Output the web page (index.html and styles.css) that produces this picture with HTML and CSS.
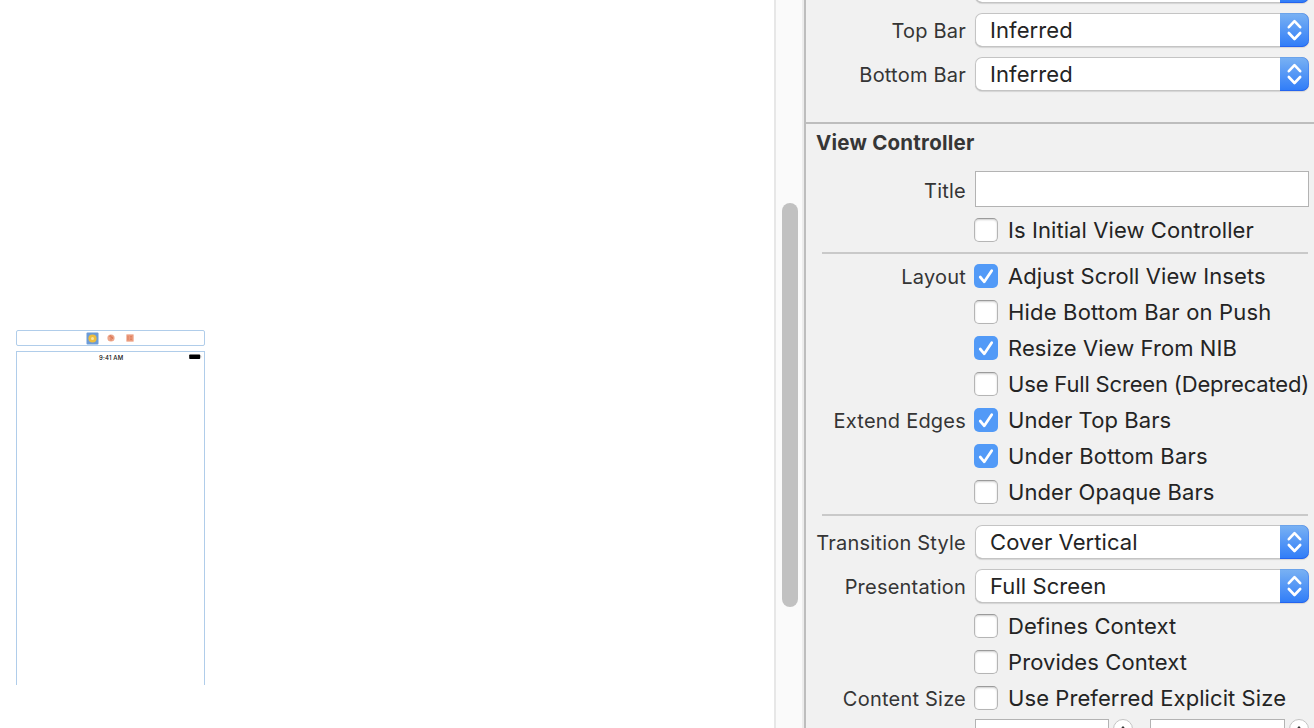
FILE: index.html
```html
<!DOCTYPE html>
<html lang="en">
<head>
<meta charset="utf-8">
<title>View Controller inspector</title>
<link rel="stylesheet" href="styles.css">
</head>
<body>
<svg class="defs" width="0" height="0" aria-hidden="true">
  <symbol id="chevrons" viewBox="0 0 29 34"><path d="M8.8 14.2 14.5 8.2 20.2 14.2M8.8 20 14.5 26 20.2 20" fill="none" stroke="#fff" stroke-width="2.6" stroke-linecap="round" stroke-linejoin="round"/></symbol>
  <symbol id="check" viewBox="0 0 24 24"><path d="M6.2 13 10.3 17.8 17.7 6.7" fill="none" stroke="#fff" stroke-width="2.7" stroke-linecap="round" stroke-linejoin="round"/></symbol>
</svg>
<div class="app">
  <main class="canvas">
    <div class="dock">
      <svg width="13" height="13" viewBox="0 0 13 13"><rect x=".5" y=".5" width="12" height="12" rx="1" fill="#6b9bd8"/><circle cx="6.5" cy="6.5" r="4.1" fill="#edbd3e"/><circle cx="6.5" cy="6.5" r="1.5" fill="#fae5a0"/></svg>
      <svg width="8" height="8" viewBox="0 0 8 8"><circle cx="4" cy="4" r="3.6" fill="#eda68b"/><path d="M2.3 2.4 4 1.7V6.5M4 3.2H5.6V5" fill="none" stroke="#d8714e" stroke-width=".9"/></svg>
      <svg width="8" height="8" viewBox="0 0 8 8"><rect x=".4" y=".4" width="7.2" height="7.2" fill="#ec9b7d"/><path d="M2 2V6M4 2.5H6M4 4H6M4 5.5H6" fill="none" stroke="#dc7c5c" stroke-width=".8"/></svg>
    </div>
    <div class="device">
      <span class="clock">9:41 AM</span>
      <svg class="battery" width="13" height="6" viewBox="0 0 13 6"><rect x=".2" y=".4" width="11" height="4.6" rx=".8" fill="#000"/><path d="M11.8 1.9V3.5" stroke="#888" stroke-width=".6"/></svg>
    </div>
  </main>
  <div class="scroller"><div class="thumb"></div></div>
  <aside class="inspector">
    <section class="metrics">
      <div class="row tall"><span class="label"></span><div class="select"><span class="value"></span><svg class="arrows"><use href="#chevrons"/></svg></div></div>
      <div class="row tall"><span class="label">Top Bar</span><div class="select"><span class="value">Inferred</span><svg class="arrows"><use href="#chevrons"/></svg></div></div>
      <div class="row tall"><span class="label">Bottom Bar</span><div class="select"><span class="value">Inferred</span><svg class="arrows"><use href="#chevrons"/></svg></div></div>
    </section>
    <section class="controller">
      <h2 class="heading">View Controller</h2>
      <div class="row tall"><span class="label">Title</span><div class="field"></div></div>
      <div class="row"><span class="label"></span><span class="box"></span><span class="option">Is Initial View Controller</span></div>
      <hr class="rule">
      <div class="row"><span class="label">Layout</span><span class="box on"><svg><use href="#check"/></svg></span><span class="option">Adjust Scroll View Insets</span></div>
      <div class="row"><span class="label"></span><span class="box"></span><span class="option wide">Hide Bottom Bar on Push</span></div>
      <div class="row"><span class="label"></span><span class="box on"><svg><use href="#check"/></svg></span><span class="option">Resize View From NIB</span></div>
      <div class="row"><span class="label"></span><span class="box"></span><span class="option tight">Use Full Screen (Deprecated)</span></div>
      <div class="row"><span class="label">Extend Edges</span><span class="box on"><svg><use href="#check"/></svg></span><span class="option">Under Top Bars</span></div>
      <div class="row"><span class="label"></span><span class="box on"><svg><use href="#check"/></svg></span><span class="option wide">Under Bottom Bars</span></div>
      <div class="row"><span class="label"></span><span class="box"></span><span class="option">Under Opaque Bars</span></div>
      <hr class="rule">
      <div class="row tall"><span class="label">Transition Style</span><div class="select"><span class="value">Cover Vertical</span><svg class="arrows"><use href="#chevrons"/></svg></div></div>
      <div class="row tall"><span class="label">Presentation</span><div class="select"><span class="value">Full Screen</span><svg class="arrows"><use href="#chevrons"/></svg></div></div>
      <div class="row"><span class="label"></span><span class="box"></span><span class="option">Defines Context</span></div>
      <div class="row"><span class="label"></span><span class="box"></span><span class="option">Provides Context</span></div>
      <div class="row"><span class="label">Content Size</span><span class="box"></span><span class="option">Use Preferred Explicit Size</span></div>
      <div class="sizes">
        <div class="number"></div><div class="stepper"><svg width="8" height="6"><path d="M1 5 4 1.5 7 5" fill="none" stroke="#333" stroke-width="2"/></svg></div>
        <div class="number second"></div><div class="stepper"><svg width="8" height="6"><path d="M1 5 4 1.5 7 5" fill="none" stroke="#333" stroke-width="2"/></svg></div>
      </div>
    </section>
  </aside>
</div>
</body>
</html>
```
FILE: styles.css
```css
* { box-sizing: border-box; }
body { margin: 0; font-family: Inter, "Liberation Sans", sans-serif; color: #242424; }
.defs { position: absolute; }
.app { display: flex; width: 1314px; height: 728px; overflow: hidden; background: #fff; }

.canvas { width: 774px; padding: 330px 0 0 16px; }
.dock { width: 189px; height: 16px; border: 1px solid #b0cdea; border-radius: 2px; display: flex; align-items: center; padding-left: 69px; }
.dock svg + svg { margin-left: 8px; }
.dock svg + svg + svg { margin-left: 11px; }
.device { width: 189px; height: 334px; margin-top: 5px; border: 1px solid #b0cdea; border-bottom: 0; display: flex; justify-content: space-between; padding: 2px 2px 0 82px; }
.clock { font-size: 6px; line-height: 7px; font-weight: 500; letter-spacing: .18px; color: #111; white-space: nowrap; }

.scroller { width: 30px; padding: 203px 0 0 6px; background: #fafafa; border-left: 2px solid #e7e7e7; border-right: 2px solid #ececec; }
.thumb { width: 16px; height: 404px; border-radius: 8px; background: #c1c1c1; }

.inspector { width: 510px; border-left: 2px solid #bdbdbd; background: #f1f1f1; overflow: hidden; }
.metrics { height: 160px; margin-top: -36px; border-bottom: 2px solid #bdbdbd; }
.heading { margin: 0; height: 44px; padding-left: 10px; font-size: 20.5px; line-height: 38px; font-weight: 700; color: #363636; letter-spacing: .22px; }
.row { display: flex; align-items: center; height: 36px; }
.row.tall { height: 44px; }
.label { width: 160px; margin-right: 8px; text-align: right; font-size: 20px; line-height: 26px; padding-top: 1px; letter-spacing: .22px; color: #353535; white-space: nowrap; }
.option, .value { font-size: 22px; line-height: 28px; white-space: nowrap; letter-spacing: .08px; }
.option { margin-left: 10px; }
.option.wide { letter-spacing: .18px; }
.option.tight { letter-spacing: -.17px; }
.select { display: flex; align-items: center; width: 334px; height: 34px; margin-left: 1px; border-radius: 7px; background: #fff; box-shadow: inset 0 0 0 1px #c4c4c4, inset 0 -1px 0 #aaa, 0 1px 1px rgba(0,0,0,.12); overflow: hidden; }
.value { flex: 1; padding-left: 15px; }
.arrows { width: 29px; height: 34px; background: linear-gradient(#7ab2f3, #2f7cf8); box-shadow: inset 0 -1px 0 #2464ef, inset -1px 0 0 rgba(55,110,235,.4), inset 0 1px 0 #6ba3ea; border-radius: 0 7px 7px 0; }
.field { width: 334px; height: 36px; margin: -2px 0 0 1px; border: 1px solid #b3b3b3; background: #fff; }
.box { width: 24px; height: 24px; border-radius: 5px; background: #fff; border: 1px solid #b5b5b5; border-top-color: #9b9b9b; box-shadow: inset 0 1px 2px rgba(0,0,0,.2); }
.box.on { border: 0; background: #529af7; box-shadow: none; }
.box svg { display: block; width: 24px; height: 24px; }
.rule { margin: 4px 6px 4px 16px; height: 2px; border: 0; background: #c9c9c9; }
.sizes { display: flex; padding: 3px 0 0 169px; }
.number { flex: none; width: 134px; height: 36px; border: 1px solid #b3b3b3; background: #fff; }
.number.second { width: 135px; margin-left: 17px; }
.stepper { flex: none; width: 20px; height: 34px; margin-left: 4px; border-radius: 10px; border: 1px solid #c4c4c4; background: #fff; display: flex; justify-content: center; padding-top: 6px; }
```
